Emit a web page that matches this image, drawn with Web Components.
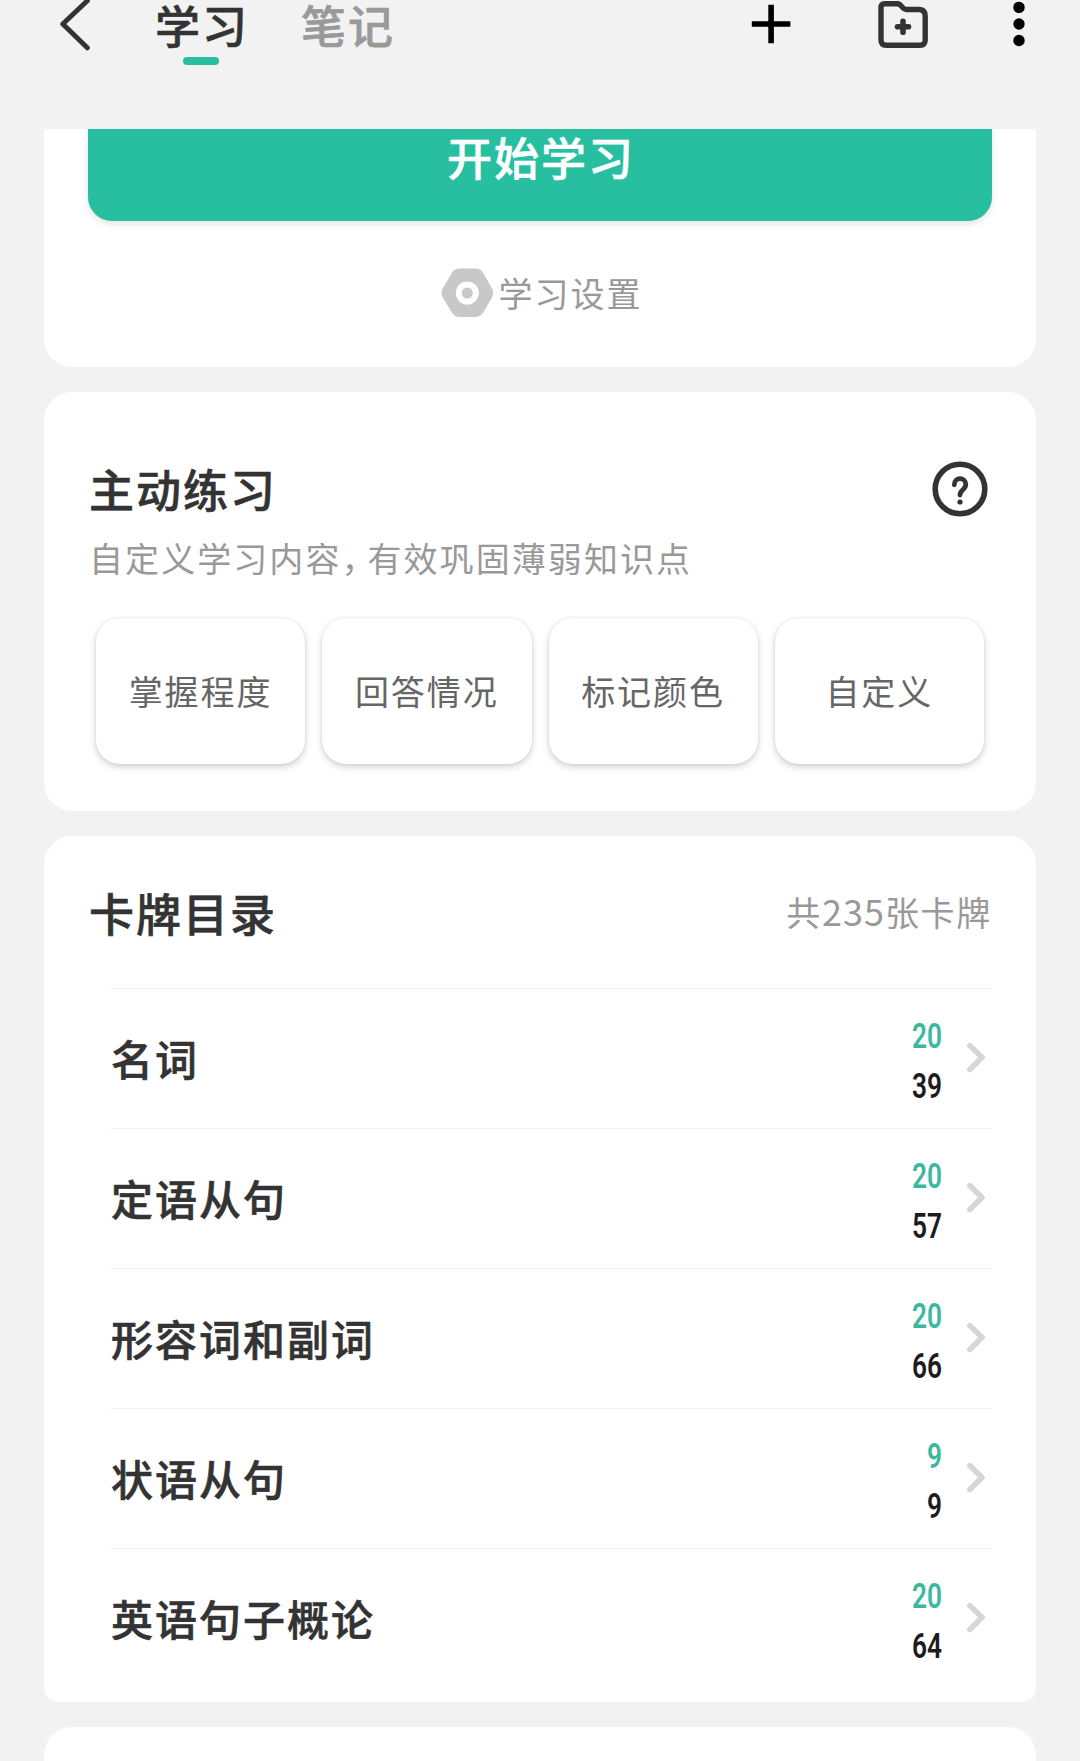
<!DOCTYPE html>
<html lang="zh-CN">
<head>
<meta charset="utf-8">
<title>学习</title>
<style>
html,body{margin:0;height:1761px;overflow:hidden;background:#f2f2f2}
body{font-family:"Noto Sans CJK SC",sans-serif;color:#333}
</style>
</head>
<body>
<study-page></study-page>
<script>
const define=(name,css,html,setup)=>customElements.define(name,class extends HTMLElement{
  connectedCallback(){
    if(this.shadowRoot)return;
    const root=this.attachShadow({mode:'open'});
    root.innerHTML=`<style>*{box-sizing:border-box}${css}</style>${html}`;
    if(setup)setup(this,root);
  }
});

define('app-bar',`
:host{display:flex;height:129px;background:#f2f2f2;align-items:flex-start;padding-left:58px}
svg{display:block;flex:none}
.back{width:34px}
.tabs{display:flex;margin-left:65px;gap:58px;flex:1}
.actions{display:flex}
`,`
<svg class="back" height="52" viewBox="58 0 34 52"><path d="M87.3 .8 62.8 24 87.3 47.8" fill="none" stroke="#333" stroke-width="5" stroke-linecap="round" stroke-linejoin="round"/></svg>
<div class="tabs"><nav-tab active>学习</nav-tab><nav-tab>笔记</nav-tab></div>
<div class="actions">
<svg width="130" height="52" viewBox="740 0 130 52"><path d="M771.1 4.7V43.2M751.8 24H790.4" fill="none" stroke="#000" stroke-width="5.6"/></svg>
<svg width="130" height="52" viewBox="870 0 130 52"><path d="M884.5 3.7H897.5C902 3.7 901.5 9.5 906.5 9.5H918.5Q925.2 9.5 925.2 16V40Q925.2 45.2 920 45.2H886.3Q881 45.2 881 40V7.5Q881 3.7 884.5 3.7Z" fill="none" stroke="#333" stroke-width="5.4" stroke-linejoin="round"/><path d="M903 21.2V32.2M897.5 26.7H908.5" stroke="#333" stroke-width="5.6" stroke-linecap="round"/></svg>
<svg width="80" height="52" viewBox="1000 0 80 52"><circle cx="1019" cy="7.4" r="5.7"/><circle cx="1019" cy="24" r="5.7"/><circle cx="1019" cy="40.5" r="5.7"/></svg>
</div>`);

define('nav-tab',`
:host{display:flex;flex-direction:column;align-items:center;color:#999;width:88px}
:host([active]){color:#333}
span{font-size:45px;font-weight:500;-webkit-text-stroke:.6px currentColor;letter-spacing:2px;line-height:48px;height:48px;margin-top:1px;padding-left:2px;white-space:nowrap}
i{width:36px;height:8px;border-radius:4px;margin-top:8px}
:host([active]) i{background:#28bfa0}
`,`<span><slot></slot></span><i></i>`);

define('white-card',`:host{display:block;background:#fff;border-radius:28px;padding:0 44px;margin-bottom:25px}`,`<slot></slot>`);

define('start-button',`
:host{display:flex;height:92px;background:#28bfa0;border-radius:0 0 24px 24px;color:#fff;justify-content:center;box-shadow:0 3px 6px rgba(0,0,0,.11)}
span{font-size:45px;font-weight:500;-webkit-text-stroke:.6px currentColor;letter-spacing:2px;line-height:48px;margin-top:4px;padding-left:2px}
`,`<span><slot></slot></span>`);

define('settings-link',`
:host{display:flex;justify-content:center;align-items:flex-start;padding:46px 0 0 2px;height:146px;color:#999}
svg{display:block;margin-right:5px}
span{font-size:34px;letter-spacing:2px;line-height:48px;margin-top:2px}
`,`<svg width="54" height="52" viewBox="0 0 54 52"><path d="M19.5 7.5H35.5Q37 7.5 38 9L46.7 24.3Q47.7 26 46.7 27.7L38 42.5Q37 44 35.5 44H19.5Q18 44 17 42.5L8 27.7Q7 26 8 24.3L17 9Q18 7.5 19.5 7.5Z" fill="#c8c8c8" stroke="#c8c8c8" stroke-width="12" stroke-linejoin="round"/><circle cx="27.3" cy="26" r="8.5" fill="none" stroke="#fff" stroke-width="6"/></svg><span><slot></slot></span>`);

define('section-title',`
:host{display:block;font-size:45px;font-weight:500;-webkit-text-stroke:.6px currentColor;letter-spacing:2px;line-height:60px;color:#333;white-space:nowrap;padding-top:2px}`,`<slot></slot>`);

define('practice-section',`
:host{display:block;height:419px;padding-top:65px}
.head{display:flex;justify-content:space-between;height:60px;padding:0 3px 0 1px}
p{margin:17px 0 0 1px;font-size:34px;letter-spacing:2.07px;line-height:48px;color:#999;white-space:nowrap}
p span{letter-spacing:-8px}
.row{display:flex;gap:17px;padding:0 8px;margin-top:36px}
`,`
<div class="head"><section-title>主动练习</section-title>
<svg width="58" height="60" viewBox="930 457 58 60"><circle cx="959" cy="489" r="24.8" fill="none" stroke="#333" stroke-width="5.6"/><path d="M953.3 484.8C953.3 476.6 964.8 476.8 964.8 484.6C964.8 490 959 489.2 959 495" fill="none" stroke="#333" stroke-width="4.8" stroke-linecap="round"/><circle cx="959" cy="502" r="2.6" fill="#333"/></svg></div>
<p>自定义学习内容<span>，</span>有效巩固薄弱知识点</p>
<div class="row"><option-tile>掌握程度</option-tile><option-tile>回答情况</option-tile><option-tile>标记颜色</option-tile><option-tile>自定义</option-tile></div>`);

define('option-tile',`
:host{display:flex;flex:1;height:146px;background:#fff;border-radius:24px;justify-content:center;align-items:center;color:#666;font-size:34px;letter-spacing:2px;line-height:48px;padding:0;white-space:nowrap;box-shadow:0 3px 7px rgba(0,0,0,.18),0 0 3px rgba(0,0,0,.08)}`,`<slot></slot>`);

define('deck-list',`
:host{display:block;height:866px}
.head{display:flex;justify-content:space-between;height:152px;padding:45px 0 0 1px}
.total{font-size:34px;line-height:60px;color:#999;letter-spacing:1.7px;margin-top:-1px}
.total b{font-weight:400;font-size:36px;letter-spacing:1px}
`,`
<div class="head"><section-title>卡牌目录</section-title><div class="total">共<b>235</b>张卡牌</div></div>
<deck-row due="20" total="39">名词</deck-row>
<deck-row due="20" total="57">定语从句</deck-row>
<deck-row due="20" total="66">形容词和副词</deck-row>
<deck-row due="9" total="9">状语从句</deck-row>
<deck-row due="20" total="64">英语句子概论</deck-row>`);

define('deck-row',`
:host{display:flex;height:140px;margin-left:23px;border-top:1px solid #f0f0f0}
.name{flex:1;font-size:42px;font-weight:500;-webkit-text-stroke:.6px currentColor;letter-spacing:2px;line-height:60px;padding-top:39px;color:#333}
.nums{display:flex;flex-direction:column;align-items:flex-end;padding-top:23px;font:600 35px/50px Roboto,sans-serif;color:#1c1c1c}
.nums span{transform:scaleX(.75);transform-origin:right}
.due{color:#3bb89e}
svg{display:block;margin:49px 0 0 19px}
`,`<div class="name"><slot></slot></div><div class="nums"><span class="due"></span><span class="total"></span></div>
<svg width="31" height="40" viewBox="961 1038 31 40"><path d="M969.9 1045.6 982 1057.5 969.9 1069.5" fill="none" stroke="#d6d6d6" stroke-width="5.6" stroke-linecap="round" stroke-linejoin="round"/></svg>`,
(host,root)=>{root.querySelector('.due').textContent=host.getAttribute('due');root.querySelector('.total').textContent=host.getAttribute('total');});

define('study-page',`
:host{display:block;width:1080px;height:1761px;overflow:hidden;background:#f2f2f2}
main{padding:0 44px}
.first{border-radius:0 0 28px 28px}
.list{border-radius:28px 28px 14px 14px}
.next{height:120px}
`,`
<app-bar></app-bar>
<main>
<white-card class="first"><start-button>开始学习</start-button><settings-link>学习设置</settings-link></white-card>
<white-card><practice-section></practice-section></white-card>
<white-card class="list"><deck-list></deck-list></white-card>
<white-card class="next"></white-card>
</main>`);
</script>
</body>
</html>
